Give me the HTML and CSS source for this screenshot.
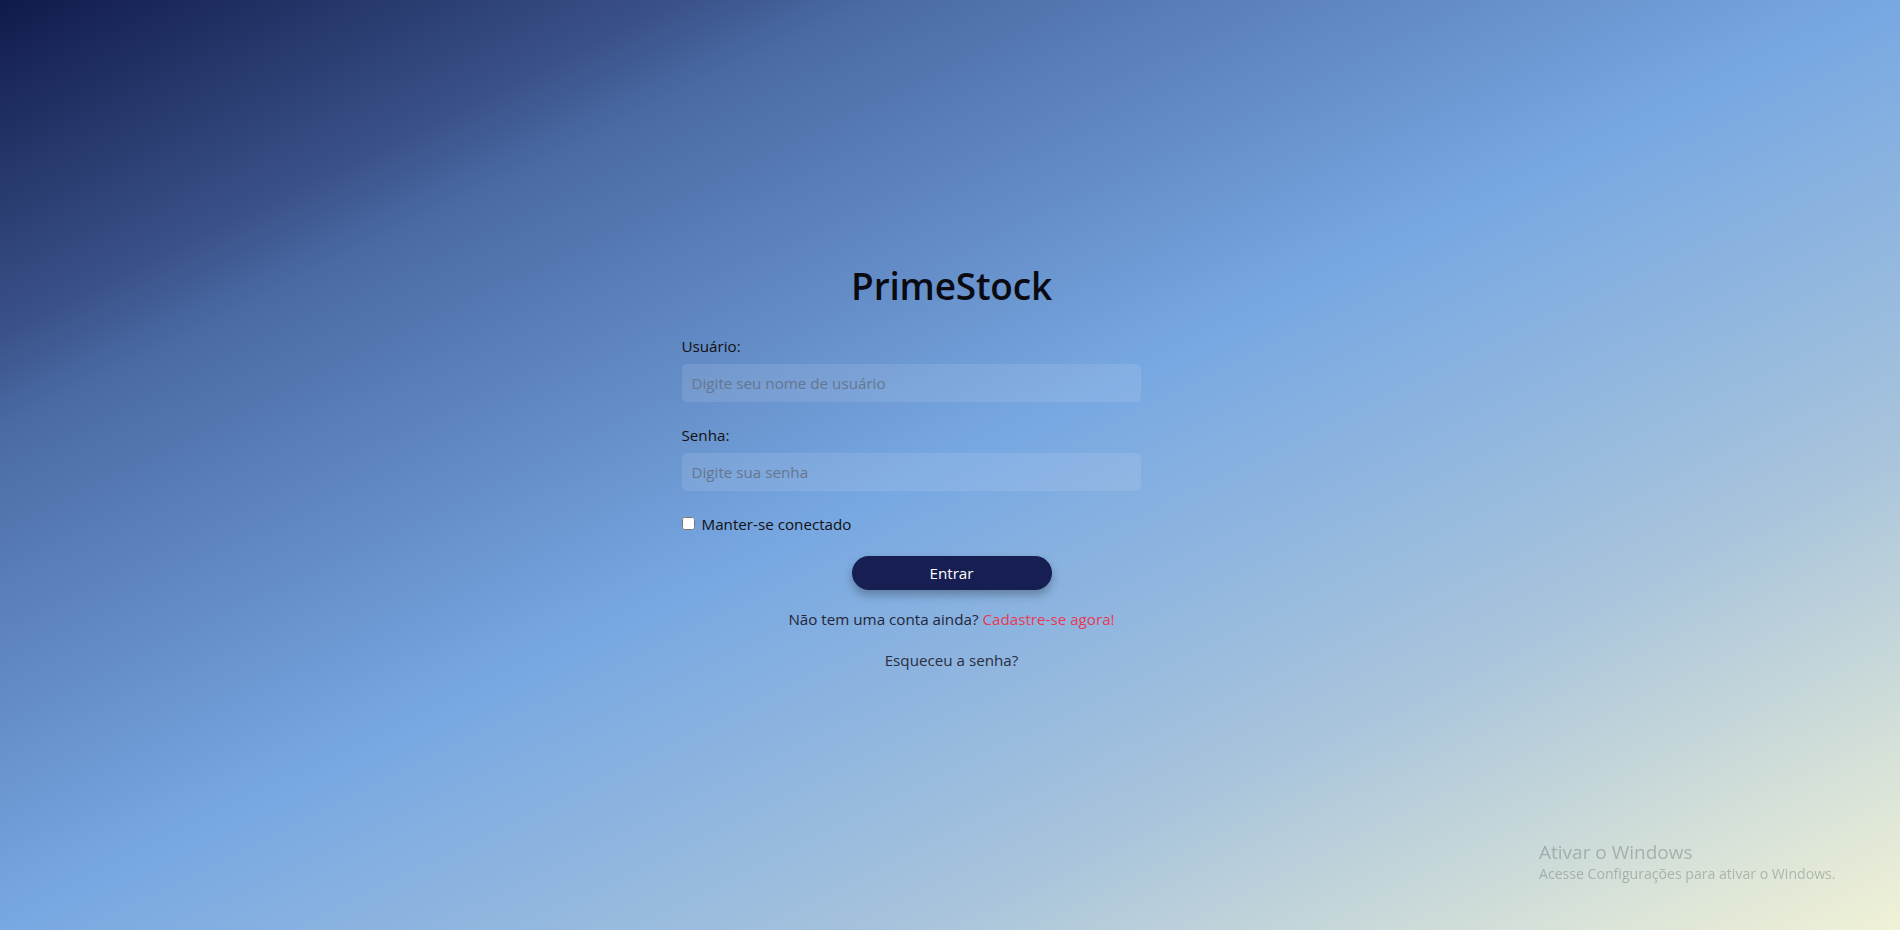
FILE: index.html
```html
<!DOCTYPE html>
<html lang="pt-BR">
<head>
<meta charset="utf-8">
<title>PrimeStock - Login</title>
<link rel="stylesheet" href="styles.css">
</head>
<body>
<main class="page">
  <form class="login">
    <h1 class="title">PrimeStock</h1>
    <div class="field">
      <label class="label" for="user">Usuário:</label>
      <input class="input" id="user" type="text" placeholder="Digite seu nome de usuário">
    </div>
    <div class="field field-second">
      <label class="label" for="pass">Senha:</label>
      <input class="input" id="pass" type="password" placeholder="Digite sua senha">
    </div>
    <label class="remember"><input class="check" type="checkbox"> <span>Manter-se conectado</span></label>
    <button class="btn" type="button">Entrar</button>
    <p class="signup">Não tem uma conta ainda? <a class="signup-link" href="#">Cadastre-se agora!</a></p>
    <p class="forgot"><a class="forgot-link" href="#">Esqueceu a senha?</a></p>
  </form>
</main>
<div class="watermark">
  <div class="wm-title">Ativar o Windows</div>
  <div class="wm-sub">Acesse Configurações para ativar o Windows.</div>
</div>
</body>
</html>
```
FILE: styles.css
```css
html, body {
  margin: 0;
  padding: 0;
  height: 100%;
}

body {
  font-family: "Open Sans", "Noto Sans", "Liberation Sans", sans-serif;
  background: linear-gradient(to bottom right,
    #101a4a 0%,
    #3a5289 18%,
    #4a6aa5 23%,
    #78a8e2 50%,
    #a8c4dc 74%,
    #f1f2d6 100%);
  color: #111;
  overflow: hidden;
}

.page {
  height: 100vh;
  display: flex;
  flex-direction: column;
  align-items: center;
  justify-content: center;
  padding-left: 3px;
  box-sizing: border-box;
}

.login {
  width: 540px;
  display: flex;
  flex-direction: column;
  margin-top: 3px;
}

.title {
  margin: 0;
  text-align: center;
  font-size: 37px;
  font-weight: 600;
  line-height: 44px;
  color: #0a0a12;
  letter-spacing: -0.2px;
}

.field {
  display: flex;
  flex-direction: column;
  margin-top: 28px;
}

.field-second {
  margin-top: 23px;
}

.label {
  font-size: 15.2px;
  line-height: 20px;
  color: #111;
  margin-bottom: 8px;
}

.input {
  width: 85%;
  height: 38px;
  box-sizing: border-box;
  border: none;
  border-radius: 5px;
  padding: 0 10px;
  background: rgba(255, 255, 255, 0.1);
  font-family: inherit;
  font-size: 15.2px;
  color: #222;
  outline: none;
}

.input::placeholder {
  color: #66768f;
}

.remember {
  display: flex;
  align-items: center;
  gap: 7px;
  margin-top: 23px;
  font-size: 15.2px;
  line-height: 20px;
  color: #111;
}

.check {
  margin: 0;
  width: 13px;
  height: 13px;
}

.btn {
  display: block;
  align-self: center;
  width: 200px;
  height: 34px;
  margin-top: 22px;
  border: none;
  border-radius: 17px;
  background: #161e52;
  color: #fff;
  font-family: inherit;
  font-size: 15.2px;
  box-shadow: 0 5px 10px rgba(0, 0, 0, 0.28);
  cursor: pointer;
}

.signup {
  margin: 19px 0 0;
  text-align: center;
  font-size: 15.2px;
  line-height: 20px;
  color: #23263a;
}

.signup-link {
  color: #e63a55;
  text-decoration: none;
}

.forgot {
  margin: 21px 0 0;
  text-align: center;
  font-size: 15.2px;
  line-height: 20px;
}

.forgot-link {
  color: #2a2e3e;
  text-decoration: none;
}

.watermark {
  position: fixed;
  left: 1539px;
  top: 840px;
  color: rgba(105, 112, 112, 0.42);
  pointer-events: none;
}

.wm-title {
  font-size: 19px;
  line-height: 24px;
}

.wm-sub {
  font-size: 14.1px;
  line-height: 20px;
}
```
